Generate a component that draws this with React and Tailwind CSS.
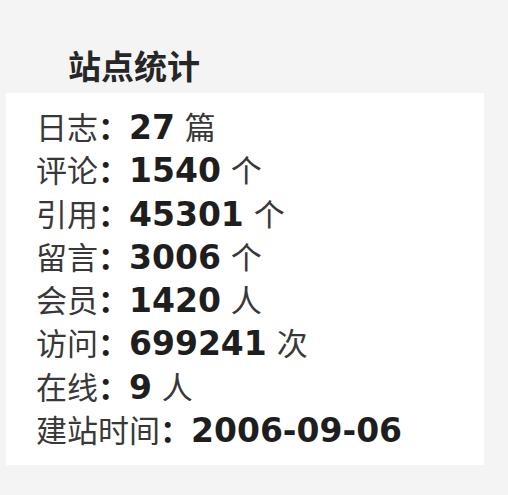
const stats = [
  { label: '日志', value: '27', unit: '篇' },
  { label: '评论', value: '1540', unit: '个' },
  { label: '引用', value: '45301', unit: '个' },
  { label: '留言', value: '3006', unit: '个' },
  { label: '会员', value: '1420', unit: '人' },
  { label: '访问', value: '699241', unit: '次' },
  { label: '在线', value: '9', unit: '人' },
  { label: '建站时间', value: '2006-09-06', unit: '' },
]

const App = () => {
  return (
    <div className="w-[508px] h-[495px] bg-[#f4f4f4] pt-[46px] font-['DejaVu_Sans','Noto_Sans_CJK_SC',sans-serif] text-[#383838]">
      <h2 className="pl-[68px] text-[33px] leading-[43px] font-bold text-[#262626]">站点统计</h2>
      <div className="mt-[4px] ml-[6px] w-[478px] bg-white pt-[14px] pb-[12px] pl-[30px]">
        {stats.map((s, idx) => (
          <div key={idx} className="h-[43.3px] text-[31px] leading-[43.3px] whitespace-nowrap">
            <span>{s.label}</span>
            <span className="font-bold text-[#1e1e1e]">：</span>
            <span className="font-bold text-[33px] leading-none text-[#1e1e1e]">{s.value}</span>
            {s.unit && <span> {s.unit}</span>}
          </div>
        ))}
      </div>
    </div>
  )
}

export default App
